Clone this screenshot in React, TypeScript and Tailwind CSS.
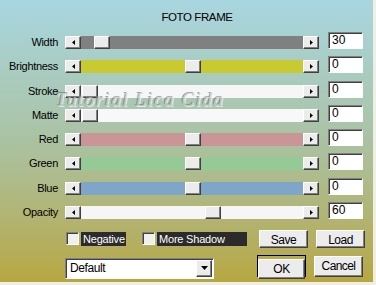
import React from "react";

const raised =
  "border border-t-white border-l-white border-r-[#404040] border-b-[#404040] shadow-[inset_-1px_-1px_0_#808080] bg-[#ececec]";
const sunken =
  "border border-t-[#808080] border-l-[#808080] border-r-white border-b-white shadow-[inset_1px_1px_0_#404040]";

type Row = { label: string; track: string; thumb: number; value: string };

// thumb = left offset of the thumb inside the track (px)
const rows: Row[] = [
  { label: "Width", track: "bg-[#808080]", thumb: 13, value: "30" },
  { label: "Brightness", track: "bg-[#c9c932]", thumb: 104, value: "0" },
  { label: "Stroke", track: "bg-[#f6f6f6]", thumb: 1, value: "0" },
  { label: "Matte", track: "bg-[#f8f8f8]", thumb: 1, value: "0" },
  { label: "Red", track: "bg-[#c99597]", thumb: 104, value: "0" },
  { label: "Green", track: "bg-[#95c995]", thumb: 104, value: "0" },
  { label: "Blue", track: "bg-[#7fa6c9]", thumb: 104, value: "0" },
  { label: "Opacity", track: "bg-[#f6f6f6]", thumb: 124, value: "60" },
];

function Arrow({ dir }: { dir: "left" | "right" | "down" }) {
  if (dir === "down")
    return (
      <svg width="7" height="4" viewBox="0 0 7 4">
        <polygon points="0,0 7,0 3.5,4" fill="#000" />
      </svg>
    );
  return (
    <svg width="3" height="5" viewBox="0 0 3 5">
      <polygon points={dir === "left" ? "3,0 3,5 0,2.5" : "0,0 0,5 3,2.5"} fill="#000" />
    </svg>
  );
}

function SliderRow({ row }: { row: Row }) {
  return (
    <div className="flex items-center h-[24.3px]">
      <div className="w-[58px] text-right text-[11px] tracking-[-0.3px] text-black leading-none">
        {row.label}
      </div>
      <div className={`ml-[7px] w-[16px] h-[13px] flex items-center justify-center ${raised}`}>
        <Arrow dir="left" />
      </div>
      <div className={`relative w-[222px] h-[13px] ${row.track}`}>
        <div
          className={`absolute top-0 w-[16px] h-[13px] ${raised}`}
          style={{ left: row.thumb }}
        />
      </div>
      <div className={`w-[16px] h-[13px] flex items-center justify-center ${raised}`}>
        <Arrow dir="right" />
      </div>
      <div
        className={`ml-[9px] mb-[4px] w-[35px] h-[17px] bg-white pl-[3px] text-[12px] leading-[15px] ${sunken}`}
      >
        {row.value}
      </div>
    </div>
  );
}

function Check({ label, w }: { label: string; w: string }) {
  return (
    <div className="flex items-center">
      <div className={`w-[13px] h-[13px] bg-[#f0f0ec] ${sunken}`} />
      <div
        className={`ml-[2px] h-[14px] ${w} bg-[#2b2b2b] text-white text-[11px] tracking-[-0.2px] leading-[14px] pl-[2px]`}
      >
        {label}
      </div>
    </div>
  );
}

export default function App() {
  return (
    <div className="w-[376px] h-[285px] bg-[#efefe6]" style={{ fontFamily: '"Liberation Sans", Arial, sans-serif' }}>
      <div className="relative w-[373px] h-[282px] bg-gradient-to-b from-[#a8d6e0] via-[#aac2a2] to-[#b7a73f] flex flex-col">
        <div className="pt-[12px] pl-[21px] flex justify-center text-[11.5px] tracking-[-0.4px] leading-[11px] h-[30.35px]">
          FOTO FRAME
        </div>

        <div className="flex flex-col">
          {rows.map((r) => (
            <SliderRow key={r.label} row={r} />
          ))}
        </div>

        {/* watermark over the sliders */}
        <div
          className="absolute left-[56px] top-[86px] text-[19px] italic text-[#c8c8c8] opacity-70 tracking-[1.5px] whitespace-nowrap pointer-events-none [text-shadow:-1px_-1px_0_#7a7a7a,1px_1px_0_#ffffff]"
          style={{ fontFamily: '"Liberation Serif", "DejaVu Serif", serif' }}
        >
          Tutorial Lica Cida
        </div>

        <div className="mt-[5px] flex items-center h-[18px]">
          <div className="ml-[66px]">
            <Check label="Negative" w="w-[45px]" />
          </div>
          <div className="ml-[16px]">
            <Check label="More Shadow" w="w-[90px]" />
          </div>
          <button className={`ml-[12px] w-[49px] h-[18px] text-[12px] tracking-[-0.5px] ${raised}`}>Save</button>
          <button className={`ml-[8px] w-[49px] h-[18px] text-[12px] tracking-[-0.5px] ${raised}`}>Load</button>
        </div>

        <div className="mt-[7px] flex items-start h-[24px]">
          <div className={`ml-[65px] mt-[3px] w-[149px] h-[21px] bg-white flex items-center justify-between ${sunken}`}>
            <span className="pl-[4px] text-[12px] tracking-[-0.4px]">Default</span>
            <div className={`mr-[1px] w-[16px] h-[17px] flex items-center justify-center ${raised}`}>
              <Arrow dir="down" />
            </div>
          </div>
          <div className="ml-[43px] w-[49px] h-[22px] border border-black">
            <button className={`w-full h-full text-[12px] tracking-[-0.5px] ${raised}`}>OK</button>
          </div>
          <button className={`ml-[8px] mt-[1px] w-[49px] h-[21px] text-[12px] tracking-[-0.6px] ${raised}`}>Cancel</button>
        </div>
      </div>
    </div>
  );
}
